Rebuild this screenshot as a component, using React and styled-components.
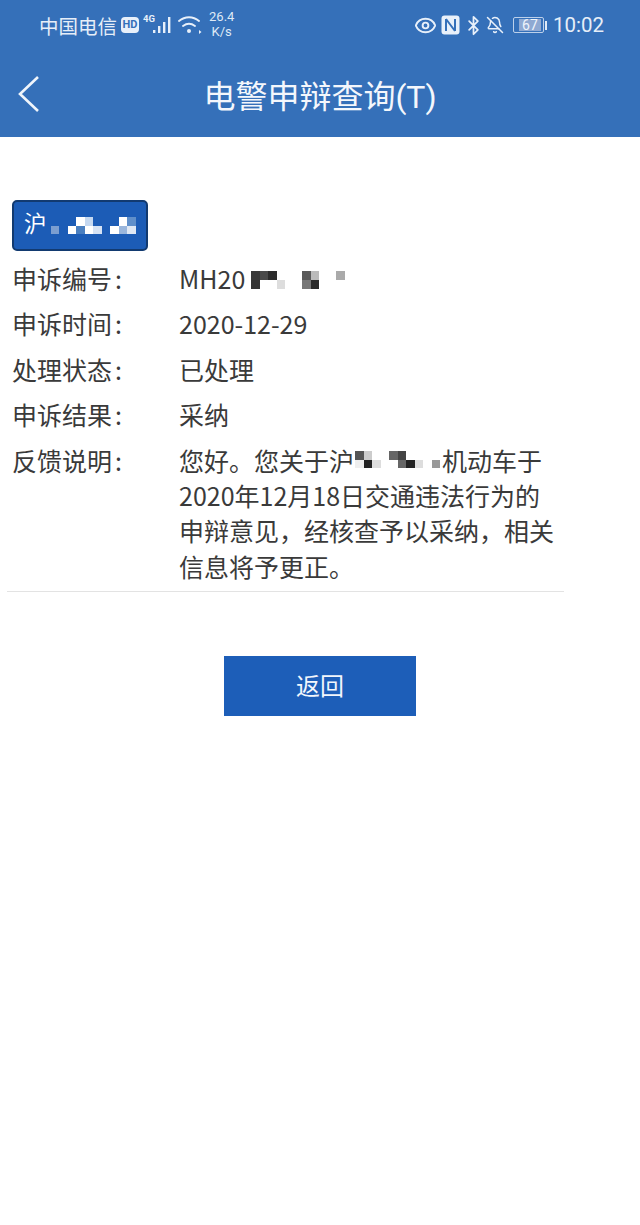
import React from 'react';
import styled, { createGlobalStyle } from 'styled-components';
import { Eye, Bluetooth, BellOff } from 'lucide-react';

const GlobalStyle = createGlobalStyle`
	html, body {
		margin: 0;
		padding: 0;
		background: #fff;
		font-family: "Noto Sans CJK SC", Roboto, sans-serif;
	}
`;

const Page = styled.div`
	width: 640px;
	height: 1225px;
	background: #fff;
	overflow: hidden;
`;
const Header = styled.header`
	height: 137px;
	background: #3570b9;
	color: #fff;
`;
const StatusBar = styled.div`
	height: 50px;
	display: flex;
	justify-content: space-between;
	align-items: center;
	padding: 0 36px 0 39px;
`;
const StatusGroup = styled.div`
	display: flex;
	align-items: center;
	gap: ${(p) => p.$gap}px;
`;
const Carrier = styled.span`
	font-size: 19.5px;
	color: #e6eef8;
`;
const HdBadge = styled.span`
	width: 18px;
	height: 16px;
	border-radius: 4px;
	background: #e8f0fa;
	color: #3570b9;
	font-family: Roboto, sans-serif;
	font-size: 11px;
	font-weight: 700;
	line-height: 16px;
	text-align: center;
`;
const Speed = styled.span`
	font-family: Roboto, sans-serif;
	font-size: 13px;
	line-height: 15px;
	text-align: center;
	color: #dfe9f6;
	margin-left: 3px;
	margin-top: -2px;
`;
const Battery = styled.span`
	display: flex;
	align-items: center;
	gap: 1px;
	margin-left: 7px;
`;
const BatteryBody = styled.span`
	width: 31px;
	height: 16px;
	box-sizing: border-box;
	border: 1px solid #bcd0ea;
	border-radius: 2px;
	padding: 1px;
	display: flex;
`;
const BatteryFill = styled.span`
	width: 22px;
	margin-left: 4px;
	background: #8fa9d2;
	color: #eef4fb;
	font-family: Roboto, sans-serif;
	font-size: 14px;
	line-height: 12px;
	text-align: center;
`;
const BatteryCap = styled.span`
	width: 2px;
	height: 9px;
	background: #dfe9f6;
`;
const Clock = styled.span`
	font-family: Roboto, sans-serif;
	font-size: 20.5px;
	color: #e6eef8;
	margin-left: 4px;
`;
const EyeIcon = styled(Eye)`
	margin-right: 2px;
`;
const SignalIcon = styled.svg`
	margin-right: 1px;
`;
const NfcIcon = styled.svg`
	margin-right: 1px;
`;
const Nav = styled.div`
	height: 87px;
	display: flex;
	align-items: center;
`;
const Back = styled.div`
	width: 60px;
	display: flex;
	padding-left: 17px;
	box-sizing: border-box;
`;
const Title = styled.h1`
	flex: 1;
	margin: 0;
	font-family: Roboto, "Noto Sans CJK SC", sans-serif;
	font-size: 32px;
	font-weight: 400;
	text-align: center;
	color: #f4f7fc;
`;
const Spacer = styled.div`
	width: 60px;
`;
const Content = styled.main`
	padding: 63px 0 0 7px;
`;
const Plate = styled.div`
	width: 136px;
	height: 51px;
	box-sizing: border-box;
	margin: 0 0 10px 5px;
	display: flex;
	align-items: center;
	gap: 4px;
	padding-left: 10px;
	background: #1c5cb6;
	border: 2px solid #123a70;
	border-radius: 5px;
	color: #fff;
	font-size: 22.5px;
`;
const PlateName = styled.span`
	margin-top: -8px;
`;
const Rows = styled.div`
	display: flex;
	flex-direction: column;
	gap: 10px;
	padding-left: 5px;
	width: 557px;
	box-sizing: border-box;
	padding-bottom: 7px;
	border-bottom: 1px solid #e3e3e3;
`;
const Row = styled.div`
	display: flex;
	font-size: 25px;
	line-height: 35.4px;
	color: #3a3a3a;
`;
const Label = styled.div`
	width: 167px;
	flex: none;
`;
const Value = styled.div`
	width: 378px;
	flex: none;
`;
const Colon = styled.span`
	margin-left: 3px;
`;
const Mosaic = styled.span`
	display: inline-grid;
	grid-template-columns: repeat(${(p) => p.$cols}, 8.5px);
	grid-auto-rows: 8.75px;
	vertical-align: ${(p) => p.$raise || 0}px;
	margin: 0 ${(p) => p.$right || 0}px 0 ${(p) => p.$left || 0}px;
`;
const Cell = styled.span`
	background: ${(p) => p.$c};
`;
const ReturnButton = styled.button`
	display: block;
	width: 192px;
	height: 60px;
	margin: 64px 0 0 217px;
	padding: 0 0 3px;
	border: 0;
	background: #1d5eb8;
	color: #f2f6fc;
	font: inherit;
	font-size: 24px;
`;

const T = 'transparent';

const Cells = ({ cols, colors, raise, left, right }) => (
	<Mosaic $cols={cols} $raise={raise} $left={left} $right={right}>
		{colors.map((c, i) => (
			<Cell key={i} $c={c} />
		))}
	</Mosaic>
);

// Blurred out parts of the plate and the case number
const plateNo = [
	T, T, T, '#fff', '#c5d8f0', T, T, T, '#fff', '#5f8fca',
	'#7b9ed0', T, '#fff', '#4a7fc0', '#fff', '#d5e2f4', T, '#fff', '#9ab6dc', '#dfe8f4',
];
const caseNo = [
	'#3a3a3a', '#4a4a4a', '#2c2c2c', T, T, T, '#5a5a5a', '#bbb', T, T, '#aaa', T,
	'#333', T, T, '#ddd', T, T, '#777', '#2a2a2a', T, T, T, T,
];
const lineNo = [
	'#555', '#ccc', T, T, '#666', '#444', T, T, T, T,
	'#eee', '#222', '#ddd', T, T, '#666', '#222', '#ddd', T, '#999',
];

const Signal = () => (
	<SignalIcon width="30" height="24" viewBox="0 0 30 24" fill="#e8f0fa">
		<text x="0" y="9" fontSize="9.5" fontWeight="700" fontFamily="Roboto, sans-serif">4G</text>
		<rect x="10" y="17" width="2.4" height="3" />
		<rect x="15" y="13" width="2.4" height="7" />
		<rect x="20" y="9" width="2.4" height="11" />
		<rect x="25" y="4" width="2.4" height="16" />
	</SignalIcon>
);

const Wifi = () => (
	<svg width="24" height="20" viewBox="0 0 24 20" fill="none" stroke="#e8f0fa" strokeWidth="1.9" strokeLinecap="round">
		<path d="M1 6c6-5 14-5 20 0" />
		<path d="M5 11c4-3 8-3 12 0" />
		<circle cx="11" cy="16" r="2" fill="#e8f0fa" stroke="none" />
		<path d="M21 15l2.5 2-2.5 2z" fill="#e8f0fa" stroke="none" />
	</svg>
);

const Nfc = () => (
	<NfcIcon width="19" height="20" viewBox="0 0 19 20">
		<rect x="0.5" y="0.5" width="18" height="19" rx="3" fill="#e8f0fa" />
		<path d="M5 4v12M14 4v12M5 4l9 12" fill="none" stroke="#3570b9" strokeWidth="2" />
	</NfcIcon>
);

const Chevron = () => (
	<svg width="24" height="38" viewBox="0 0 24 38" fill="none" stroke="#f0f5fb" strokeWidth="2.6">
		<path d="M21 2L3 19l18 17" />
	</svg>
);

const App = () => (
	<Page>
		<GlobalStyle />
		<Header>
			<StatusBar>
				<StatusGroup $gap={4}>
					<Carrier>中国电信</Carrier>
					<HdBadge>HD</HdBadge>
					<Signal />
					<Wifi />
					<Speed>
						26.4
						<br />
						K/s
					</Speed>
				</StatusGroup>
				<StatusGroup $gap={2}>
					<EyeIcon size={23} color="#e8f0fa" strokeWidth={2} />
					<Nfc />
					<Bluetooth size={21} color="#e8f0fa" strokeWidth={2} />
					<BellOff size={18} color="#e8f0fa" strokeWidth={2} />
					<Battery>
						<BatteryBody>
							<BatteryFill>67</BatteryFill>
						</BatteryBody>
						<BatteryCap />
					</Battery>
					<Clock>10:02</Clock>
				</StatusGroup>
			</StatusBar>
			<Nav>
				<Back>
					<Chevron />
				</Back>
				<Title>电警申辩查询(T)</Title>
				<Spacer />
			</Nav>
		</Header>
		<Content>
			<Plate>
				<PlateName>沪</PlateName>
				<Cells cols={10} colors={plateNo} />
			</Plate>
			<Rows>
				<Row>
					<Label>申诉编号<Colon>:</Colon></Label>
					<Value>MH20<Cells cols={12} colors={caseNo} left={6} raise={9} /></Value>
				</Row>
				<Row>
					<Label>申诉时间<Colon>:</Colon></Label>
					<Value>2020-12-29</Value>
				</Row>
				<Row>
					<Label>处理状态<Colon>:</Colon></Label>
					<Value>已处理</Value>
				</Row>
				<Row>
					<Label>申诉结果<Colon>:</Colon></Label>
					<Value>采纳</Value>
				</Row>
				<Row>
					<Label>反馈说明<Colon>:</Colon></Label>
					<Value>
						您好。您关于沪<Cells cols={10} colors={lineNo} left={1} right={2} raise={11} />机动车于2020年12月18日交通违法行为的申辩意见，经核查予以采纳，相关信息将予更正。
					</Value>
				</Row>
			</Rows>
			<ReturnButton>返回</ReturnButton>
		</Content>
	</Page>
);

export default App;
